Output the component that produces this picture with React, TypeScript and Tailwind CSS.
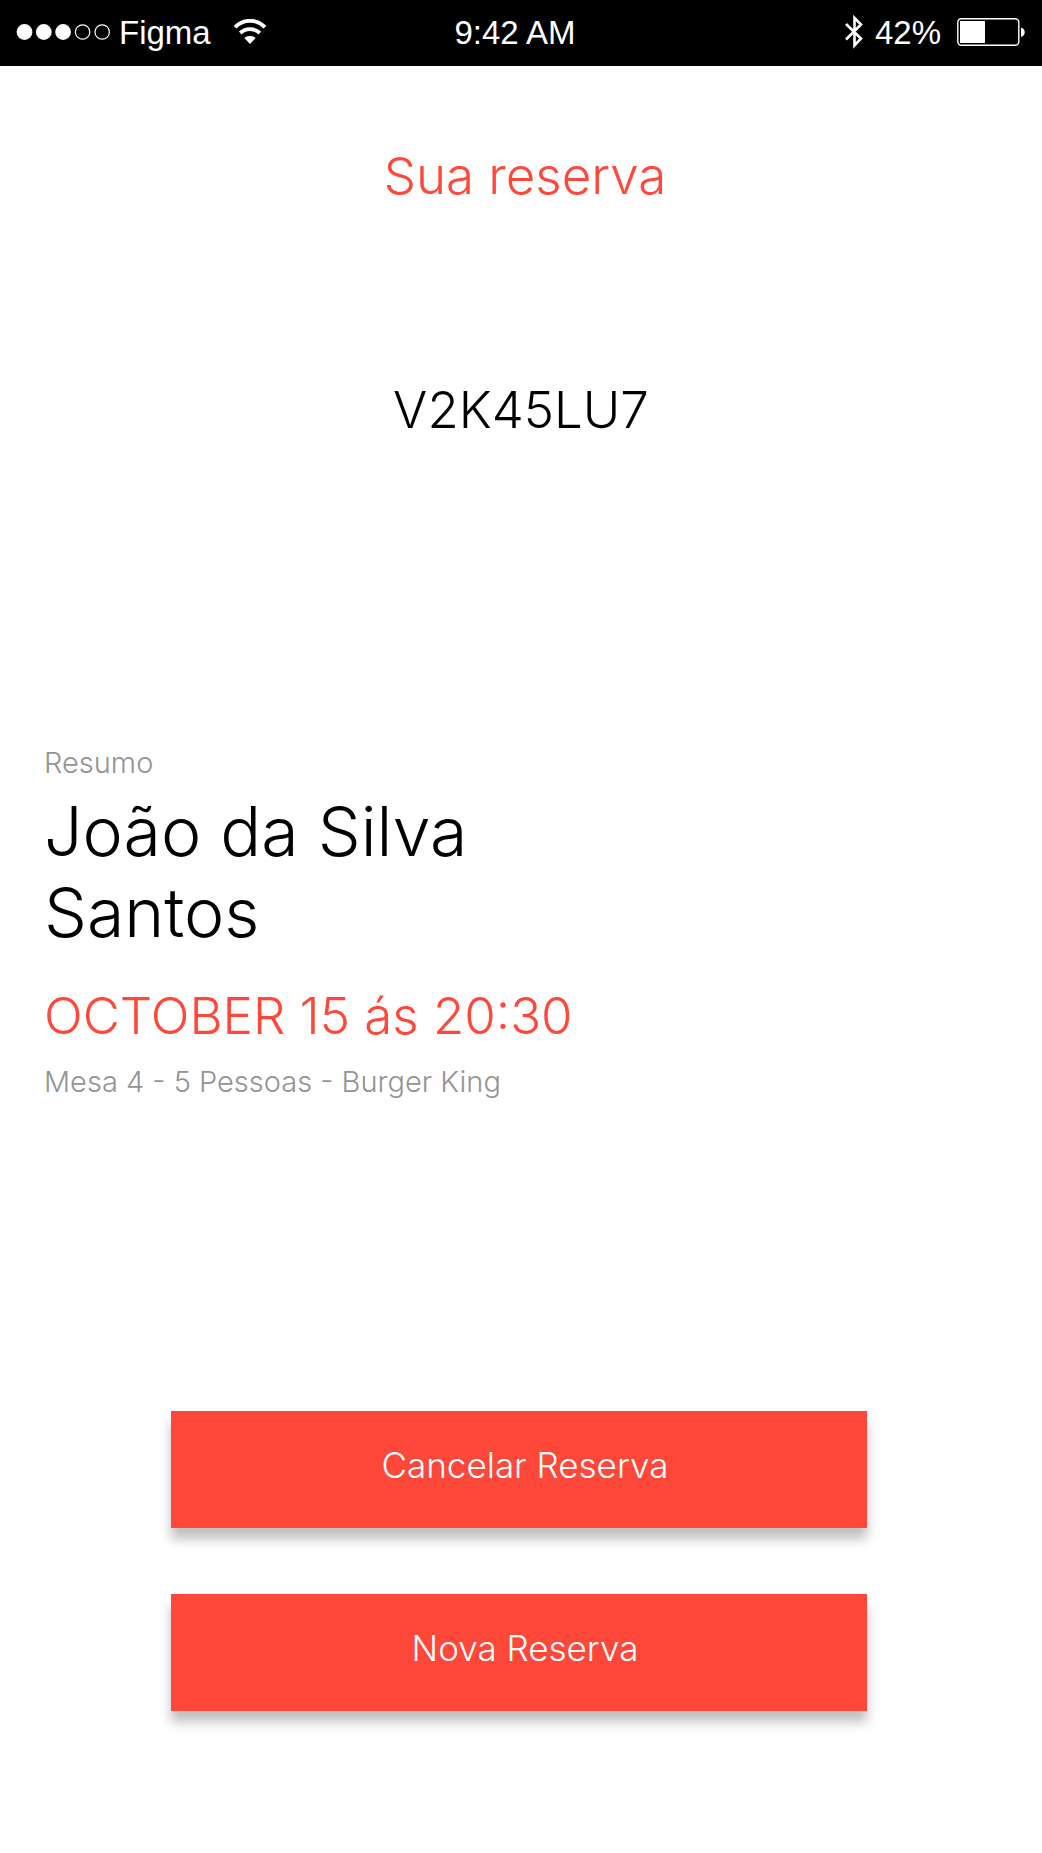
import type { ReactNode } from "react";

function SignalDots() {
  return (
    <svg width="95" height="18" viewBox="0 0 95 18" aria-label="Signal: 3 of 5">
      {[8.5, 27.8, 47.1].map((cx) => (
        <circle key={cx} cx={cx} cy="9" r="7.9" fill="white" />
      ))}
      {[66.6, 86.2].map((cx) => (
        <circle key={cx} cx={cx} cy="9" r="7.2" fill="none" stroke="white" strokeWidth="1.2" />
      ))}
    </svg>
  );
}

function WifiIcon() {
  return (
    <svg width="34" height="26" viewBox="0 0 34 26" fill="none" aria-label="Wi-Fi">
      <path d="M2 8.2C10.5 -0.4 23.5 -0.4 32 8.2" stroke="white" strokeWidth="3.8" />
      <path d="M7.2 14C12.8 8.8 21.2 8.8 26.8 14" stroke="white" strokeWidth="3.8" />
      <path d="M11.4 19C14.5 16.4 19.5 16.4 22.6 19L17 25Z" fill="white" />
    </svg>
  );
}

function BluetoothIcon() {
  return (
    <svg width="18" height="36" viewBox="0 0 18 36" fill="none" aria-label="Bluetooth">
      <path d="M1 10L16 24.5L9.5 31.5V4L16 10.5L1 25.5" stroke="white" strokeWidth="2.6" />
    </svg>
  );
}

function BatteryIcon() {
  return (
    <svg width="69" height="28" viewBox="0 0 69 28" fill="none" aria-label="Battery">
      <rect x="0.8" y="0.8" width="61" height="26.4" rx="3.5" stroke="white" strokeWidth="1.4" />
      <rect x="3" y="3" width="25" height="22" fill="white" />
      <path d="M64 9.5C69 10.5 69 18 64 19Z" fill="white" />
    </svg>
  );
}

function StatusBar() {
  return (
    <header className="grid h-[66px] grid-cols-3 items-center bg-black px-4 pb-0.5 font-['Liberation_Sans',sans-serif] text-[33px] leading-none text-white">
      <div className="flex items-center gap-2">
        <SignalDots />
        <span>Figma</span>
        <span className="ml-3.5">
          <WifiIcon />
        </span>
      </div>
      <time className="pr-3 text-center">9:42 AM</time>
      <div className="flex items-center justify-end gap-3">
        <BluetoothIcon />
        <span className="mr-1">42%</span>
        <BatteryIcon />
      </div>
    </header>
  );
}

function ActionButton({ children }: { children: ReactNode }) {
  return (
    <button
      type="button"
      className="h-[117px] w-full bg-[#ff473a] pb-2 pl-3 text-[35px] font-light text-white shadow-[0_11px_11px_rgba(0,0,0,0.25)]"
    >
      {children}
    </button>
  );
}

export default function App() {
  return (
    <div className="min-h-screen bg-white font-['Inter',sans-serif] font-[350] text-black">
      <StatusBar />
      <main className="flex flex-col pt-20 pb-32">
        <h1 className="pl-2 text-center text-[51px] leading-[60px] text-[#ff473a]">Sua reserva</h1>
        <p className="mt-[174px] text-center text-[51px] leading-[60px]">V2K45LU7</p>

        <section className="mt-[305px] px-11">
          <p className="text-[29px] leading-9 font-light text-[#949494]">Resumo</p>
          <h2 className="mt-[10px] max-w-[520px] text-[68px] leading-[81px]">João da Silva Santos</h2>
          <p className="mt-[33px] text-[51px] leading-[60px] text-[#ff473a]">OCTOBER 15 ás 20:30</p>
          <p className="mt-[18px] text-[29px] leading-9 font-light text-[#949494]">
            Mesa 4 - 5 Pessoas - Burger King
          </p>
        </section>

        <div className="mt-[311px] flex justify-center pr-1">
          <div className="flex w-[67%] flex-col gap-[66px]">
            <ActionButton>Cancelar Reserva</ActionButton>
            <ActionButton>Nova Reserva</ActionButton>
          </div>
        </div>
      </main>
    </div>
  );
}
